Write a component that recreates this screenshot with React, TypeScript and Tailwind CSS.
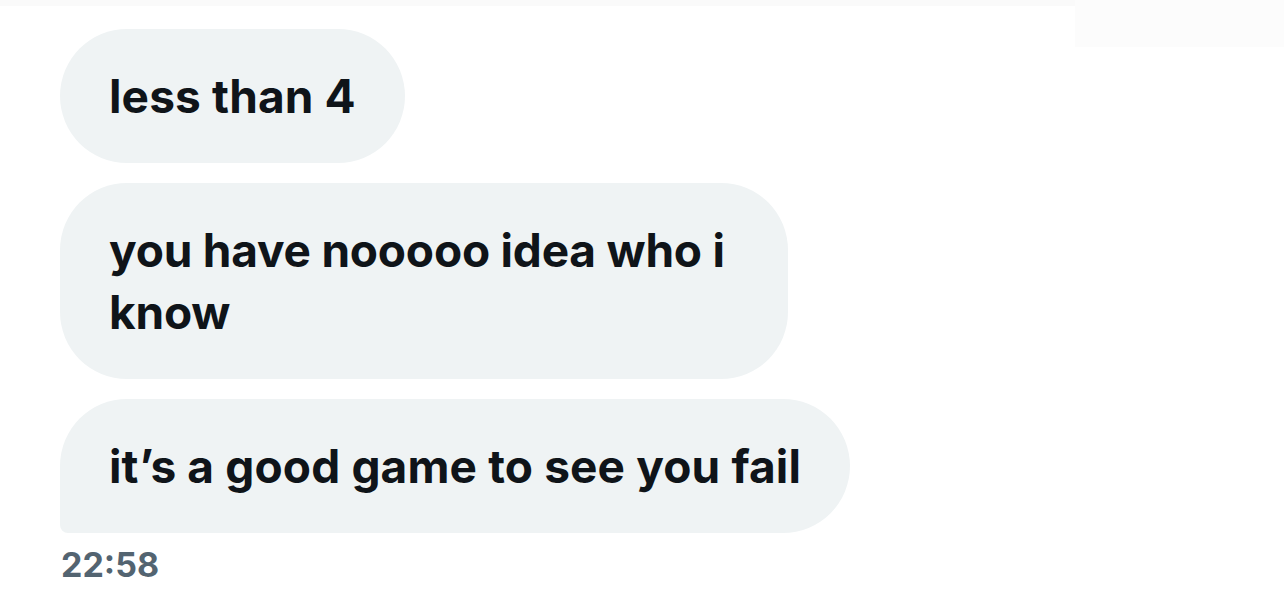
export default function App() {
  return (
    <div className="relative h-[597px] w-[1284px] overflow-hidden bg-white font-['Inter','Liberation_Sans',sans-serif]">
      <div className="absolute left-0 top-0 h-[6px] w-[1075px] bg-[#fafafa]" />
      <div className="absolute right-0 top-0 h-[47px] w-[209px] bg-[#fcfcfc]" />
      <div className="flex flex-col items-start gap-5 pl-[60px] pt-[29px]">
        <div className="rounded-[67px] bg-[#eff3f4] px-[49px] py-9 text-[46px] font-bold leading-[62px] tracking-[0.15px] text-[#0f1419]">
          less than 4
        </div>
        <div className="w-[728px] rounded-[67px] bg-[#eff3f4] px-[49px] py-9 text-[46px] font-bold leading-[62px] tracking-[-0.2px] text-[#0f1419]">
          you have nooooo idea who i know
        </div>
        <div className="rounded-[67px] rounded-bl-[8px] bg-[#eff3f4] px-[49px] py-9 text-[46px] font-bold leading-[62px] tracking-[0.15px] text-[#0f1419]">
          it’s a good game to see you fail
        </div>
      </div>
      <div className="pl-[61px] pt-[12px] text-[34px] font-bold leading-[40px] text-[#536471]">22:58</div>
    </div>
  );
}
